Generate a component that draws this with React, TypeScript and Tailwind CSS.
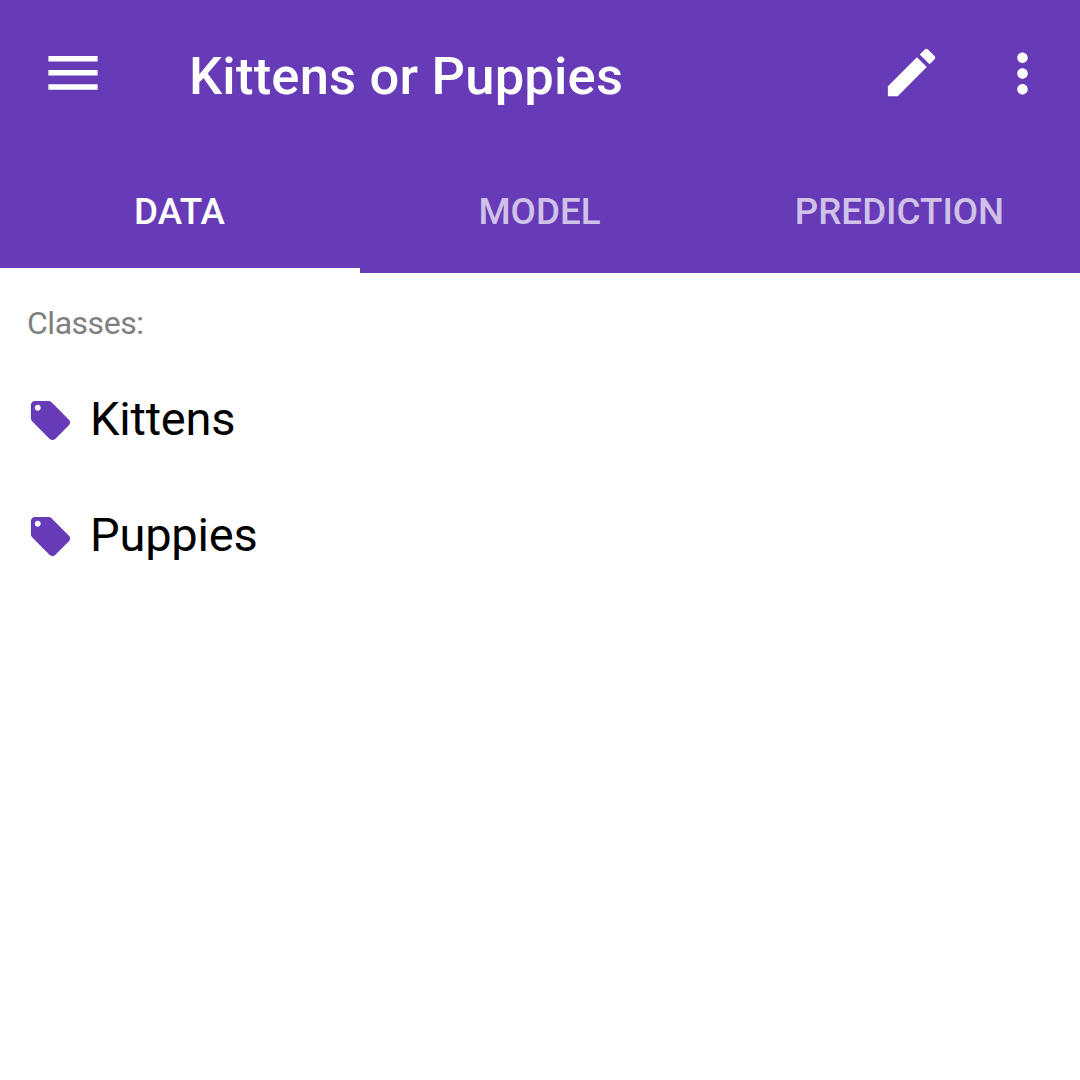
const Icon = ({ d, size, className = "" }: { d: string; size: number; className?: string }) => (
  <svg viewBox="0 0 24 24" width={size} height={size} fill="currentColor" className={`shrink-0 ${className}`}>
    <path d={d} />
  </svg>
);

const PENCIL = "M3 17.25V21h3.75L17.81 9.94l-3.75-3.75L3 17.25zM20.71 7.04c.39-.39.39-1.02 0-1.41l-2.34-2.34c-.39-.39-1.02-.39-1.41 0l-1.83 1.83 3.75 3.75 1.83-1.83z";
const MORE = "M12 8c1.1 0 2-.9 2-2s-.9-2-2-2-2 .9-2 2 .9 2 2 2zm0 2c-1.1 0-2 .9-2 2s.9 2 2 2 2-.9 2-2-.9-2-2-2zm0 6c-1.1 0-2 .9-2 2s.9 2 2 2 2-.9 2-2-.9-2-2-2z";
const TAG = "M21.41 11.58l-9-9C12.05 2.22 11.55 2 11 2H4c-1.1 0-2 .9-2 2v7c0 .55.22 1.05.59 1.42l9 9c.36.36.86.58 1.41.58.55 0 1.05-.22 1.41-.59l7-7c.37-.36.59-.86.59-1.41 0-.55-.23-1.06-.59-1.42zM5.5 7C4.67 7 4 6.33 4 5.5S4.67 4 5.5 4 7 4.67 7 5.5 6.33 7 5.5 7z";

const tabs = ["DATA", "MODEL", "PREDICTION"];
const classes = ["Kittens", "Puppies"];

export default function App() {
  return (
    <div className="h-[1080px] w-[1080px] overflow-hidden bg-white font-[Roboto,sans-serif]">
      <header className="h-[273px] bg-[#673ab7] text-white">
        <div className="flex h-[147px] items-center">
          <button aria-label="Menu" className="mb-px ml-[40px] shrink-0">
            <svg viewBox="0 0 66 66" width="66" height="66" fill="currentColor" className="block">
              <path d="M8.4 16h49.2v5.5H8.4zM8.4 30.1h49.2v5.5H8.4zM8.4 44.2h49.2v5.5H8.4z" />
            </svg>
          </button>
          <h1 className="mt-[4px] ml-[83px] flex-1 text-[52.5px] leading-[62px] font-medium tracking-[0.2px] whitespace-nowrap">
            Kittens or Puppies
          </h1>
          <button aria-label="Edit" className="mb-[2px]">
            <Icon size={63} d={PENCIL} />
          </button>
          <button aria-label="More options" className="mr-[26px] ml-[48.5px]">
            <Icon size={63} d={MORE} />
          </button>
        </div>
        <nav className="grid h-[126px] grid-cols-3">
          {tabs.map((tab, i) => (
            <button
              key={tab}
              className={`flex items-center justify-center border-b-[5px] pt-[9px] pr-px text-[36.75px] font-medium ${i === 0 ? "border-white text-white" : "border-transparent text-white/70"}`}
            >
              {tab}
            </button>
          ))}
        </nav>
      </header>
      <main className="px-[27px] pt-[31px]">
        <h2 className="text-[32px] leading-[38px] tracking-[-0.48px] text-[#808080]">Classes:</h2>
        <ul className="mt-[20px]">
          {classes.map((name) => (
            <li key={name} className="flex h-[116px] items-center">
              <Icon size={47} d={TAG} className="text-[#673ab7]" />
              <span className="mb-[2px] ml-[16px] text-[47px] leading-[56px] tracking-[-0.2px] text-black">{name}</span>
            </li>
          ))}
        </ul>
      </main>
    </div>
  );
}
